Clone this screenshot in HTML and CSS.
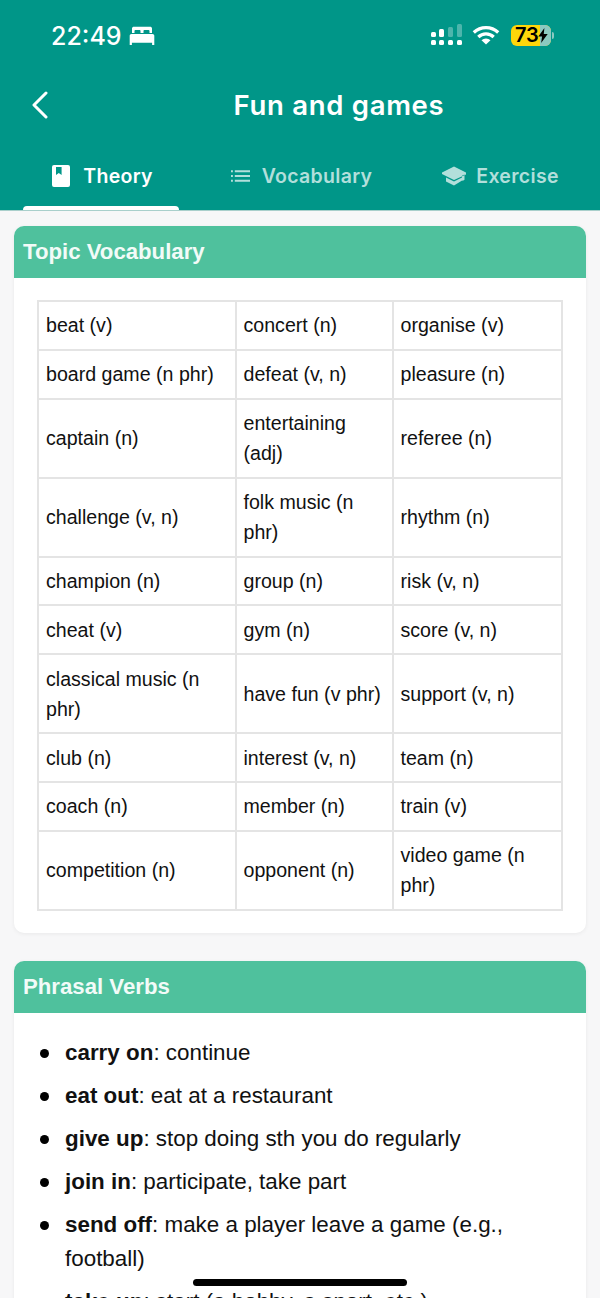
FILE: index.html
```
<!DOCTYPE html>
<html lang="en">
<head>
<meta charset="utf-8">
<title>Fun and games</title>
<link rel="stylesheet" href="styles.css">
</head>
<body>
<div class="screen">
  <header class="top">
    <div class="status">
      <div class="status-left">
        <span class="time">22:49</span>
        <svg class="bed" viewBox="0 0 26 20" width="26" height="20"><path fill="#fff" d="M3 2.500C3 1.400 3.900.8 5 .8h16c1.100 0 2 .6 2 1.700V7h-2.500V5c0-.6-.5-1-1-1h-4c-.6 0-1 .4-1 1v2h-3V5c0-.6-.4-1-1-1h-4c-.5 0-1 .4-1 1v2H3zM2.500 8h21c1 0 1.800.8 1.800 1.800V19h-2.200v-2.200H2.900V19H.7V9.800C.7 8.800 1.500 8 2.500 8z"/></svg>
      </div>
      <div class="status-right">
        <svg class="signal" viewBox="0 0 32 22" width="32" height="22">
          <g fill="#fff"><rect x="0" y="8" width="5" height="5" rx="1.500"/><rect x="8" y="5" width="5" height="8" rx="1.500"/><rect x="0" y="16" width="5" height="5" rx="1.500"/><rect x="8" y="16" width="5" height="5" rx="1.500"/><rect x="17" y="16" width="5" height="5" rx="1.500"/><rect x="26" y="16" width="5" height="5" rx="1.500"/></g>
          <g fill="#fff" opacity=".3"><rect x="17" y="3" width="5" height="10" rx="1.500"/><rect x="26" y="0" width="5" height="13" rx="1.500"/></g>
        </svg>
        <svg class="wifi" viewBox="0 0 28 20" width="28" height="20"><path fill="none" stroke="#fff" stroke-width="3.200" d="M1.800 7.500a17.500 17.500 0 0 1 24.400 0M6.300 12a11 11 0 0 1 15.400 0"/><path fill="#fff" d="M14 19.500l-4.500-4.300a6.500 6.500 0 0 1 9 0z"/></svg>
        <div class="battery">
          <span class="batt-fill">73</span>
          <span class="batt-rest"></span>
          <svg class="bolt" viewBox="0 0 10 16" width="10" height="15"><path fill="#000" d="M6.500 0L0 9h4l-1 7 7-9.500H5.800z"/></svg>
          <span class="batt-cap"></span>
        </div>
      </div>
    </div>
    <div class="nav">
      <svg class="back" viewBox="0 0 18 28" width="18" height="28"><path fill="none" stroke="#fff" stroke-width="3" stroke-linecap="round" stroke-linejoin="round" d="M15 2L3 14l12 12"/></svg>
      <h1 class="title">Fun and games</h1>
    </div>
    <div class="tabs">
      <div class="tab active">
        <svg viewBox="0 0 18 22" width="18" height="22"><path fill="#fff" fill-rule="evenodd" d="M2 0h14a2 2 0 0 1 2 2v18a2 2 0 0 1-2 2H2a2 2 0 0 1-2-2V2a2 2 0 0 1 2-2zm2 2v8l2.800-2 2.800 2V2z"/></svg>
        <span>Theory</span>
      </div>
      <div class="tab vocab-tab">
        <svg viewBox="0 0 20 14" width="19" height="14"><path fill="#b2dfdb" d="M0 1h2v2H0zM4 1h16v2H4zM0 6h2v2H0zM4 6h16v2H4zM0 11h2v2H0zM4 11h16v2H4z"/></svg>
        <span>Vocabulary</span>
      </div>
      <div class="tab exercise-tab">
        <svg viewBox="0 0 24 20" width="24" height="20"><path fill="#b2dfdb" fill-rule="evenodd" d="M12 .5L24 6.500v2L12 14 0 8V6.500zM4 11.500l8 4 8-4V9.800l2.500-1.200v5.200L20.500 15v-.8L12 19.500 4 15.500z"/></svg>
        <span>Exercise</span>
      </div>
    </div>
  </header>
  <main class="content">
    <section class="card">
      <h2 class="card-head">Topic Vocabulary</h2>
      <div class="card-body table-body">
        <table class="vocab">
          <tr><td>beat (v)</td><td>concert (n)</td><td>organise (v)</td></tr>
          <tr><td>board game (n phr)</td><td>defeat (v, n)</td><td>pleasure (n)</td></tr>
          <tr><td>captain (n)</td><td>entertaining (adj)</td><td>referee (n)</td></tr>
          <tr><td>challenge (v, n)</td><td>folk music (n phr)</td><td>rhythm (n)</td></tr>
          <tr><td>champion (n)</td><td>group (n)</td><td>risk (v, n)</td></tr>
          <tr><td>cheat (v)</td><td>gym (n)</td><td>score (v, n)</td></tr>
          <tr><td>classical music (n phr)</td><td>have fun (v phr)</td><td>support (v, n)</td></tr>
          <tr><td>club (n)</td><td>interest (v, n)</td><td>team (n)</td></tr>
          <tr><td>coach (n)</td><td>member (n)</td><td>train (v)</td></tr>
          <tr><td>competition (n)</td><td>opponent (n)</td><td>video game (n phr)</td></tr>
        </table>
      </div>
    </section>
    <section class="card">
      <h2 class="card-head">Phrasal Verbs</h2>
      <div class="card-body list-body">
        <ul class="verbs">
          <li><b>carry on</b>: continue</li>
          <li><b>eat out</b>: eat at a restaurant</li>
          <li><b>give up</b>: stop doing sth you do regularly</li>
          <li><b>join in</b>: participate, take part</li>
          <li><b>send off</b>: make a player leave a game (e.g., football)</li>
          <li><b>take up</b>: start (a hobby, a sport, etc.)</li>
        </ul>
      </div>
    </section>
  </main>
  <div class="home"></div>
</div>
</body>
</html>
```
FILE: styles.css
```
* { box-sizing: border-box; }
html, body { margin: 0; padding: 0; }
body { font-family: "Liberation Sans", Arial, sans-serif; background: #f7f7f8; }
.screen { position: relative; width: 600px; height: 1298px; overflow: hidden; background: #f7f7f8; }

.top { height: 211px; background: #009688; border-bottom: 1px solid #a9cfcb; color: #fff; font-family: Inter, sans-serif; }
.status { height: 72px; padding: 22px 46px 0 51px; display: flex; justify-content: space-between; align-items: flex-start; }
.status-left { display: flex; align-items: center; gap: 7px; }
.time { font-size: 25px; font-weight: 500; line-height: 28px; }
.status-right { display: flex; align-items: center; margin-top: 2px; margin-right: 3px; }
.wifi { margin-left: 9px; }
.battery { position: relative; display: flex; align-items: center; width: 40px; height: 21px; margin-left: 11px; border-radius: 6px; overflow: visible; background: #ffd60a; }
.batt-fill { color: #000; font-size: 20px; font-weight: 600; line-height: 21px; padding-left: 4px; letter-spacing: -.3px; }
.batt-rest { position: absolute; left: 29px; top: 0; width: 11px; height: 21px; background: #8cc9c1; border-radius: 0 6px 6px 0; }
.bolt { position: absolute; left: 27px; top: 3px; }
.batt-cap { position: absolute; left: 41px; top: 7px; width: 2px; height: 7px; background: #8cc9c1; border-radius: 0 2px 2px 0; }

.nav { height: 66px; position: relative; display: flex; align-items: center; justify-content: center; padding-left: 78px; }
.back { position: absolute; left: 31px; top: 19px; }
.title { margin: 0; font-size: 27.500px; font-weight: 600; line-height: 36px; letter-spacing: .7px; }

.tabs { display: flex; height: 72px; }
.tab { flex: 1; position: relative; display: flex; align-items: center; justify-content: center; gap: 13px; padding-top: 4px; color: #b2dfdb; font-size: 19.500px; font-weight: 600; letter-spacing: .3px; }
.tab.active { color: #fff; padding-left: 3px; }
.tab.active::after { content: ""; position: absolute; left: 23px; right: 23px; bottom: 0; height: 4px; background: #fff; border-radius: 4px 4px 0 0; }
.vocab-tab { gap: 12px; }
.exercise-tab { gap: 10px; }

.content { padding: 15px 14px 0; display: flex; flex-direction: column; gap: 28px; }
.card { background: #fff; border-radius: 10px; box-shadow: 0 1px 4px rgba(0,0,0,.06); }
.card-head { margin: 0; height: 52px; padding: 0 9px; background: #4fc19d; color: #f2fbf8; border-radius: 10px 10px 0 0; font-size: 22.200px; font-weight: 700; line-height: 52px; }
.table-body { padding: 22px 23px; }
.vocab { width: 526px; border-collapse: collapse; table-layout: fixed; font-size: 19.600px; color: #111; }
.vocab td { border: 2px solid #e4e4e4; padding: 8.450px 7px; line-height: 30px; }
.vocab td:nth-child(1) { width: 197.500px; }
.vocab td:nth-child(2) { width: 157px; }

.list-body { padding: 23px 20px 20px 51px; }
.verbs { margin: 0; padding: 0; font-size: 22.400px; line-height: 34px; color: #111; list-style: none; }
.verbs li { position: relative; margin-bottom: 9px; }
.verbs li::before { content: ""; position: absolute; left: -25.500px; top: 13px; width: 9px; height: 9px; border-radius: 50%; background: #000; }
.verbs b { font-weight: 700; }

.home { position: absolute; left: 193px; top: 1279px; width: 214px; height: 7px; background: #000; border-radius: 4px; }
```
